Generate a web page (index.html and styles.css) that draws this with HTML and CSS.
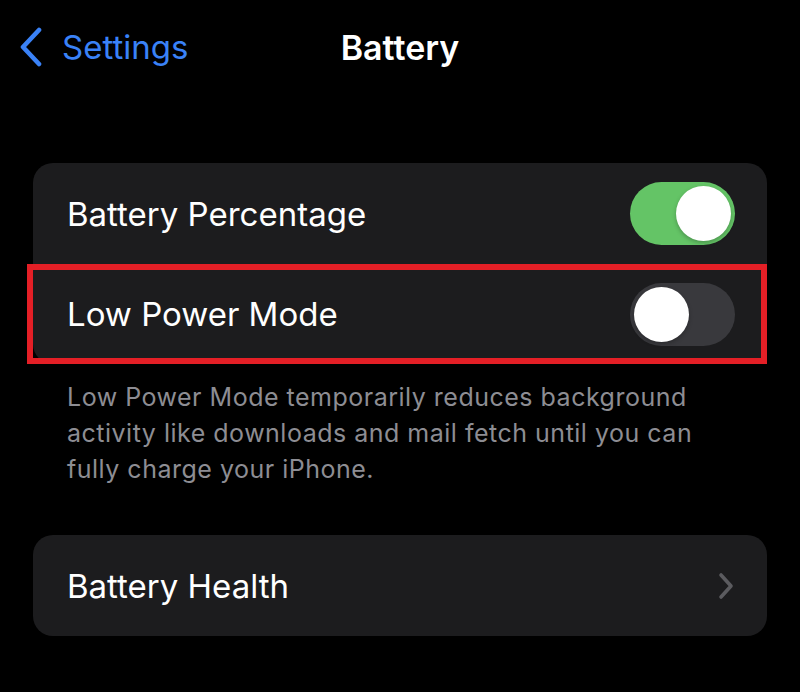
FILE: index.html
```html
<!DOCTYPE html>
<html lang="en">
<head>
<meta charset="utf-8">
<title>Battery</title>
<link rel="stylesheet" href="styles.css">
</head>
<body>
<div class="screen">
  <header class="nav">
    <a class="back" href="#">
      <svg class="back-chevron" width="24" height="40" viewBox="0 0 24 40" aria-hidden="true">
        <path d="M20 3 L4 20 L20 37" fill="none" stroke="#3a82f7" stroke-width="4.6" stroke-linecap="round" stroke-linejoin="round"/>
      </svg>
      <span class="back-label">Settings</span>
    </a>
    <h1 class="title">Battery</h1>
    <div class="nav-spacer"></div>
  </header>

  <section class="group">
    <div class="row">
      <span class="row-label">Battery Percentage</span>
      <span class="toggle on"><span class="knob"></span></span>
    </div>
    <div class="row highlighted">
      <span class="row-label">Low Power Mode</span>
      <span class="toggle off"><span class="knob"></span></span>
      <span class="annotation"></span>
    </div>
  </section>

  <p class="footer">Low Power Mode temporarily reduces background activity like downloads and mail fetch until you can fully charge your iPhone.</p>

  <section class="group group-health">
    <div class="row">
      <span class="row-label">Battery Health</span>
      <svg class="disclosure" width="18" height="28" viewBox="0 0 18 28" aria-hidden="true">
        <path d="M4 3 L14 14 L4 25" fill="none" stroke="#5b5b5f" stroke-width="3.6" stroke-linecap="round" stroke-linejoin="round"/>
      </svg>
    </div>
  </section>
</div>
</body>
</html>
```

FILE: styles.css
```css
* { box-sizing: border-box; }

html, body {
  margin: 0;
  padding: 0;
  background: #000;
}

body {
  font-family: Inter, "Noto Sans", "Liberation Sans", sans-serif;
  color: #fff;
  -webkit-font-smoothing: antialiased;
}

.screen {
  width: 800px;
  height: 692px;
  overflow: hidden;
  background: #000;
}

.nav {
  height: 94px;
  display: grid;
  grid-template-columns: 1fr auto 1fr;
  align-items: center;
  padding: 0 19px;
}

.back {
  display: flex;
  align-items: center;
  gap: 19px;
  text-decoration: none;
  color: #3a82f7;
  justify-self: start;
}

.back-chevron { display: block; }

.back-label {
  font-size: 33px;
}

.title {
  margin: 0;
  font-size: 34px;
  font-weight: 600;
  color: #fff;
}

.group {
  margin: 69px 33px 0 33px;
  background: #1c1c1e;
  border-radius: 20px;
}

.row {
  position: relative;
  height: 100px;
  display: flex;
  align-items: center;
  justify-content: space-between;
  padding: 0 32px 0 34px;
}

.group .row:first-child { height: 101px; }

.group .row + .row::before {
  content: "";
  position: absolute;
  left: 34px;
  right: 0;
  top: 0;
  height: 1px;
  background: #38383a;
}

.row-label {
  font-size: 33px;
  color: #fff;
}

.toggle {
  position: relative;
  width: 105px;
  height: 63px;
  border-radius: 32px;
  display: flex;
  align-items: center;
  padding: 0 4px;
}

.toggle.on {
  background: #64c466;
  justify-content: flex-end;
}

.toggle.off {
  background: #39393d;
  justify-content: flex-start;
}

.knob {
  width: 55px;
  height: 55px;
  border-radius: 50%;
  background: #fff;
  box-shadow: 0 2px 4px rgba(0, 0, 0, 0.25);
}

.annotation {
  position: absolute;
  left: -6px;
  right: 0;
  top: 0;
  bottom: 0;
  border: 6.5px solid #e41f26;
  pointer-events: none;
}

.footer {
  width: 645px;
  margin: 15px 0 0 67px;
  font-size: 25px;
  letter-spacing: 0.5px;
  line-height: 36px;
  color: #8d8d93;
}

.group-health {
  margin-top: 48px;
}

.group-health .row { height: 101px; }

.disclosure {
  display: block;
  margin-right: 0;
}
```
